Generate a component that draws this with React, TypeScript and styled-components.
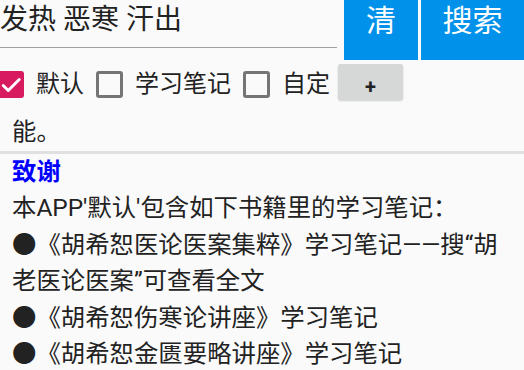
import React, { useState } from 'react'
import styled, { createGlobalStyle } from 'styled-components'

const GlobalStyle = createGlobalStyle`
  html, body {
    margin: 0;
    padding: 0;
    background: #fafafa;
    font-family: "Roboto", "Noto Sans CJK SC", sans-serif;
    color: #222222;
    overflow: hidden;
  }
`

const Page = styled.div`
  width: 524px;
  height: 370px;
  overflow: hidden;
  background: #fafafa;
`

const SearchBar = styled.div`
  display: flex;
  height: 60px;
`

const InputBox = styled.div`
  width: 337px;
  height: 48px;
  border-bottom: 1.5px solid #9e9e9e;
  box-sizing: border-box;
  font-size: 28px;
  line-height: 40px;
  white-space: pre;
  color: #222222;
`

const ActionButton = styled.button<{ $width: number }>`
  width: ${(p) => p.$width}px;
  height: 60px;
  margin-left: ${(p) => (p.$width > 90 ? 3 : 7)}px;
  border: none;
  padding: 0;
  background: #0091ea;
  color: #ffffff;
  font-family: "Roboto", "Noto Sans CJK SC", sans-serif;
  font-size: 30px;
  line-height: 42px;
  display: flex;
  align-items: flex-start;
  justify-content: center;
`

const OptionRow = styled.div`
  display: flex;
  align-items: flex-start;
  height: 54px;
  margin-left: -3px;
`

const CheckItem = styled.label`
  display: flex;
  align-items: center;
  margin-top: 11px;
  margin-right: 12px;
  height: 27px;
  cursor: pointer;
`

const Box = styled.span<{ $checked: boolean }>`
  width: 27px;
  height: 27px;
  box-sizing: border-box;
  border-radius: 3px;
  border: ${(p) => (p.$checked ? 'none' : '3px solid #757575')};
  background: ${(p) => (p.$checked ? '#d81b60' : 'transparent')};
  display: flex;
  align-items: center;
  justify-content: center;
  margin-right: 12px;
`

const CheckText = styled.span`
  font-size: 24px;
  line-height: 27px;
  color: #222222;
`

const PlusButton = styled.button`
  width: 65px;
  height: 36px;
  margin-top: 4px;
  margin-left: -4px;
  border: none;
  border-radius: 3px;
  background: #d6d7d7;
  box-shadow: 0 1px 2px rgba(0, 0, 0, 0.18);
  font-family: "Roboto", sans-serif;
  font-size: 20px;
  font-weight: 700;
  color: #222222;
  padding: 10px 0 0;
  line-height: 20px;
`

const Panel = styled.div<{ $divider?: boolean }>`
  padding: 0 18px 0 12px;
  font-size: 24.4px;
  line-height: 36.5px;
  border-bottom: ${(p) => (p.$divider ? '3px solid #e0e0e0' : 'none')};
`

const Title = styled.div`
  color: #0000ff;
  font-weight: 700;
`

const Line = styled.div``

type Option = { key: string; label: string }

const options: Option[] = [
  { key: 'default', label: '默认' },
  { key: 'notes', label: '学习笔记' },
  { key: 'custom', label: '自定' },
]

const books: string[] = [
  '●《胡希恕医论医案集粹》学习笔记——搜“胡老医论医案”可查看全文',
  '●《胡希恕伤寒论讲座》学习笔记',
  '●《胡希恕金匮要略讲座》学习笔记',
]

const Check = () => (
  <svg width="22" height="22" viewBox="0 0 24 24">
    <path d="M3.5 12.5l5.5 5.5L21 6" fill="none" stroke="#ffffff" strokeWidth="3.2" strokeLinecap="round" strokeLinejoin="round" />
  </svg>
)

const App: React.FC = () => {
  const [checked, setChecked] = useState<Record<string, boolean>>({ default: true, notes: false, custom: false })

  const toggle = (key: string) => {
    setChecked({ ...checked, [key]: !checked[key] })
  }

  return <Page>
    <GlobalStyle />
    <SearchBar>
      <InputBox>发热 恶寒 汗出</InputBox>
      <ActionButton $width={74}>清</ActionButton>
      <ActionButton $width={103}>搜索</ActionButton>
    </SearchBar>
    <OptionRow>
      {options.map((op) => (
        <CheckItem key={op.key} onClick={() => toggle(op.key)}>
          <Box $checked={checked[op.key]}>{checked[op.key] ? <Check /> : null}</Box>
          <CheckText>{op.label}</CheckText>
        </CheckItem>
      ))}
      <PlusButton>+</PlusButton>
    </OptionRow>
    <Panel $divider>能。</Panel>
    <Panel>
      <Title>致谢</Title>
      <Line>本APP'默认'包含如下书籍里的学习笔记：</Line>
      {books.map((b, index) => <Line key={index}>{b}</Line>)}
    </Panel>
  </Page>
}

export default App
